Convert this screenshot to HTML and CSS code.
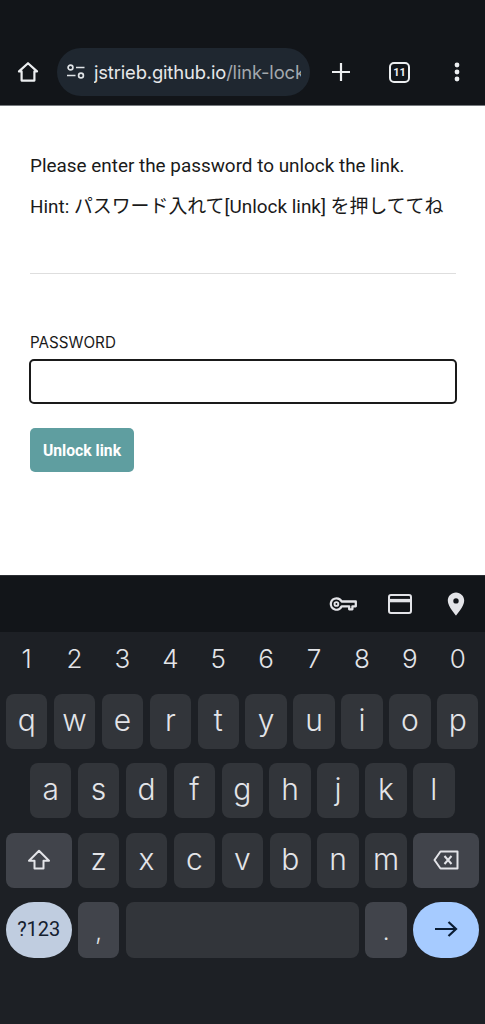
FILE: index.html
```html
<!DOCTYPE html>
<html lang="en">
<head>
<meta charset="utf-8">
<title>Link Lock</title>
<link rel="stylesheet" href="styles.css">
</head>
<body>
<div class="screen">
  <header class="toolbar">
    <svg class="ico-home" viewBox="0 0 24 24" width="24" height="24"><path d="M12 3.200 3 11.400h2.600V20.600h12.800V11.400H21Z" fill="none" stroke="#eceef0" stroke-width="2.200" stroke-linejoin="round"/></svg>
    <div class="omnibox">
      <svg class="ico-tune" viewBox="0 0 20 16" width="20" height="16"><circle cx="4.500" cy="3.500" r="2.400" fill="none" stroke="#dfe3e6" stroke-width="1.700"/><path d="M10 3.500h8.500M1 11.500h8.500" stroke="#dfe3e6" stroke-width="1.700" fill="none"/><circle cx="15" cy="11.500" r="2.400" fill="none" stroke="#dfe3e6" stroke-width="1.700"/></svg>
      <div class="url"><span class="host">jstrieb.github.io</span><span class="path">/link-lock</span></div>
    </div>
    <svg class="ico-plus" viewBox="0 0 20 20" width="20" height="20"><path d="M10 1v18M1 10h18" stroke="#eceef0" stroke-width="2.200" fill="none"/></svg>
    <div class="tabs">11</div>
    <svg class="ico-more" viewBox="0 0 6 20" width="6" height="20"><circle cx="3" cy="3" r="2.400" fill="#eceef0"/><circle cx="3" cy="10" r="2.400" fill="#eceef0"/><circle cx="3" cy="17" r="2.400" fill="#eceef0"/></svg>
  </header>

  <main class="page">
    <p class="msg first">Please enter the password to unlock the link.</p>
    <p class="msg">Hint: パスワード入れて[Unlock link] を押しててね</p>
    <hr class="rule">
    <label class="label" for="pw">PASSWORD</label>
    <input class="field" id="pw" type="password">
    <button class="unlock" type="button">Unlock link</button>
  </main>

  <section class="accessory">
    <svg class="acc-key" viewBox="0 0 28 16" width="28" height="16"><path d="M7.500 2.300a5.700 5.700 0 1 0 5.200 8h7.500v3h3.200v-3h3.400V5.500H12.700a5.700 5.700 0 0 0-5.200-3.200Z" fill="none" stroke="#e3e4e8" stroke-width="2.300" stroke-linejoin="round"/><circle cx="7.400" cy="8" r="1.900" fill="none" stroke="#e3e4e8" stroke-width="1.900"/></svg>
    <svg class="acc-card" viewBox="0 0 24 20" width="24" height="20"><rect x="1" y="1" width="22" height="18" rx="2" fill="none" stroke="#e3e4e8" stroke-width="2"/><path d="M1 6.600h22" stroke="#e3e4e8" stroke-width="3.400" fill="none"/></svg>
    <svg class="acc-pin" viewBox="0 0 18 24" width="18" height="24"><path fill-rule="evenodd" d="M9 .6C4.400.6.8 4.200.8 8.800c0 5.600 8.200 14.800 8.200 14.800s8.200-9.200 8.200-14.800C17.200 4.200 13.600.6 9 .6Zm0 5.600a2.700 2.700 0 1 1 0 5.400 2.700 2.700 0 0 1 0-5.400Z" fill="#e3e4e8"/></svg>
  </section>

  <section class="keyboard">
    <div class="digits">
      <span>1</span><span>2</span><span>3</span><span>4</span><span>5</span><span>6</span><span>7</span><span>8</span><span>9</span><span>0</span>
    </div>
    <div class="row">
      <div class="key">q</div><div class="key">w</div><div class="key">e</div><div class="key">r</div><div class="key">t</div><div class="key">y</div><div class="key">u</div><div class="key">i</div><div class="key">o</div><div class="key">p</div>
    </div>
    <div class="row inset">
      <div class="key">a</div><div class="key">s</div><div class="key">d</div><div class="key">f</div><div class="key">g</div><div class="key">h</div><div class="key">j</div><div class="key">k</div><div class="key">l</div>
    </div>
    <div class="row">
      <div class="key wide fn">
        <svg viewBox="0 0 24 22" width="24" height="22"><path d="M12 1.800 2 11.800h5.500v7.700h9v-7.700H22Z" fill="none" stroke="#e3e4e8" stroke-width="2" stroke-linejoin="round"/></svg>
      </div>
      <div class="key">z</div><div class="key">x</div><div class="key">c</div><div class="key">v</div><div class="key">b</div><div class="key">n</div><div class="key">m</div>
      <div class="key wide fn">
        <svg viewBox="0 0 26 20" width="26" height="20"><path d="M7.500 1.500H24.500V18.500H7.500L1.500 10Z" fill="none" stroke="#e3e4e8" stroke-width="2" stroke-linejoin="round"/><path d="M11.500 6 18.500 14M18.500 6 11.500 14" stroke="#e3e4e8" stroke-width="2" fill="none"/></svg>
      </div>
    </div>
    <div class="row last">
      <div class="key wide pill sym">?123</div>
      <div class="key fn punct">,</div>
      <div class="key space"></div>
      <div class="key fn punct">.</div>
      <div class="key wide pill go">
        <svg viewBox="0 0 24 18" width="24" height="18"><path d="M1 9h21M14.500 2 22 9l-7.500 7" fill="none" stroke="#0b1d33" stroke-width="2.200"/></svg>
      </div>
    </div>
  </section>
</div>
</body>
</html>
```
FILE: styles.css
```css
* { box-sizing: border-box; }
html, body { margin: 0; padding: 0; }
body { font-family: Roboto, "Noto Sans CJK JP", sans-serif; background: #fff; }
.screen { width: 485px; height: 1024px; display: flex; flex-direction: column; overflow: hidden; }

.toolbar {
  height: 106px; flex: none; background: #121519; border-bottom: 1px solid #767a7e;
  padding: 48px 0 9px 16px; display: flex; align-items: center;
}
.ico-home { flex: none; }
.omnibox {
  width: 253px; height: 48px; flex: none; margin-left: 17px; background: #1f2730; border-radius: 24px;
  display: flex; align-items: center; padding: 0 9px; gap: 8px;
}
.ico-tune { flex: none; }
.url { flex: 1; overflow: hidden; white-space: nowrap; font-family: Inter, Roboto, sans-serif; font-size: 18.4px; letter-spacing: -0.15px; }
.host { color: #e6e8ea; }
.path { color: #a3a8ad; }
.ico-plus { flex: none; margin-left: 21px; }
.tabs {
  width: 21px; height: 21px; flex: none; margin-left: 38px; border: 2px solid #eceef0; border-radius: 5px;
  color: #eceef0; font-size: 11px; font-weight: 700; display: flex; align-items: center; justify-content: center;
}
.ico-more { flex: none; margin-left: 44px; }

.page { flex: 1; padding: 0 29px 0 30px; background: #fff; display: flex; flex-direction: column; align-items: flex-start; color: #1a1a1a; }
.msg { margin: 0; font-size: 18.9px; line-height: 21px; }
.msg.first { margin: 49px 0 20px; }
.rule { width: 426px; margin: 56px 0 0; border: 0; border-top: 1px solid #dedede; height: 1px; }
.label { margin-top: 60px; font-size: 15.2px; line-height: 17px; font-family: Inter, Roboto, sans-serif; }
.field { width: 428px; height: 45px; margin: 8px 0 0 -1px; padding: 0 8px; border: 2px solid #1a1a1a; border-radius: 5px; background: #fff; outline: 0; }
.unlock {
  width: 104px; height: 44px; margin-top: 24px; border: 0; border-radius: 5px; background: #5f9ea0; color: #fff;
  font-family: Roboto, sans-serif; font-size: 15.7px; font-weight: 700; padding: 0;
}

.accessory {
  height: 57px; flex: none; background: #121519; border-top: 1px solid #2b2e33; display: flex; align-items: center;
  justify-content: flex-end; padding: 0 20px 0 0;
}
.acc-card { margin-left: 31px; }
.acc-pin { margin-left: 35px; }

.keyboard { height: 392px; flex: none; background: #1d2025; padding: 0 6px; display: flex; flex-direction: column; color: #e3e4e8; }
.digits { height: 62px; flex: none; display: grid; grid-template-columns: repeat(10, 41.4px); column-gap: 6.5px; align-items: center; font-size: 26px; font-weight: 300; font-family: Inter, Roboto, sans-serif; padding-bottom: 9px; }
.digits span { text-align: center; }
.row { display: flex; gap: 6.5px; height: 55px; flex: none; margin-bottom: 14.33px; }
.row.inset { padding-left: 24px; }
.row.last { height: 56px; }
.key {
  width: 41.4px; flex: none; background: #32353a; border-radius: 8px; display: flex; align-items: center; justify-content: center;
  font-family: Inter, Roboto, sans-serif; font-weight: 300; font-size: 30px; padding-bottom: 3px;
}
.key.wide { width: 65.5px; padding-bottom: 0; }
.key.fn { background: #41444b; }
.key.punct { font-size: 24px; padding-bottom: 6px; align-items: flex-end; line-height: 40px; }
.key.space { width: 233px; background: #32353a; }
.key.pill { border-radius: 28px; padding-bottom: 2px; }
.key.sym { background: #c0cde0; color: #14202f; font-size: 20px; font-family: Roboto, sans-serif; font-weight: 400; }
.key.go { background: #a6cbff; }
```
